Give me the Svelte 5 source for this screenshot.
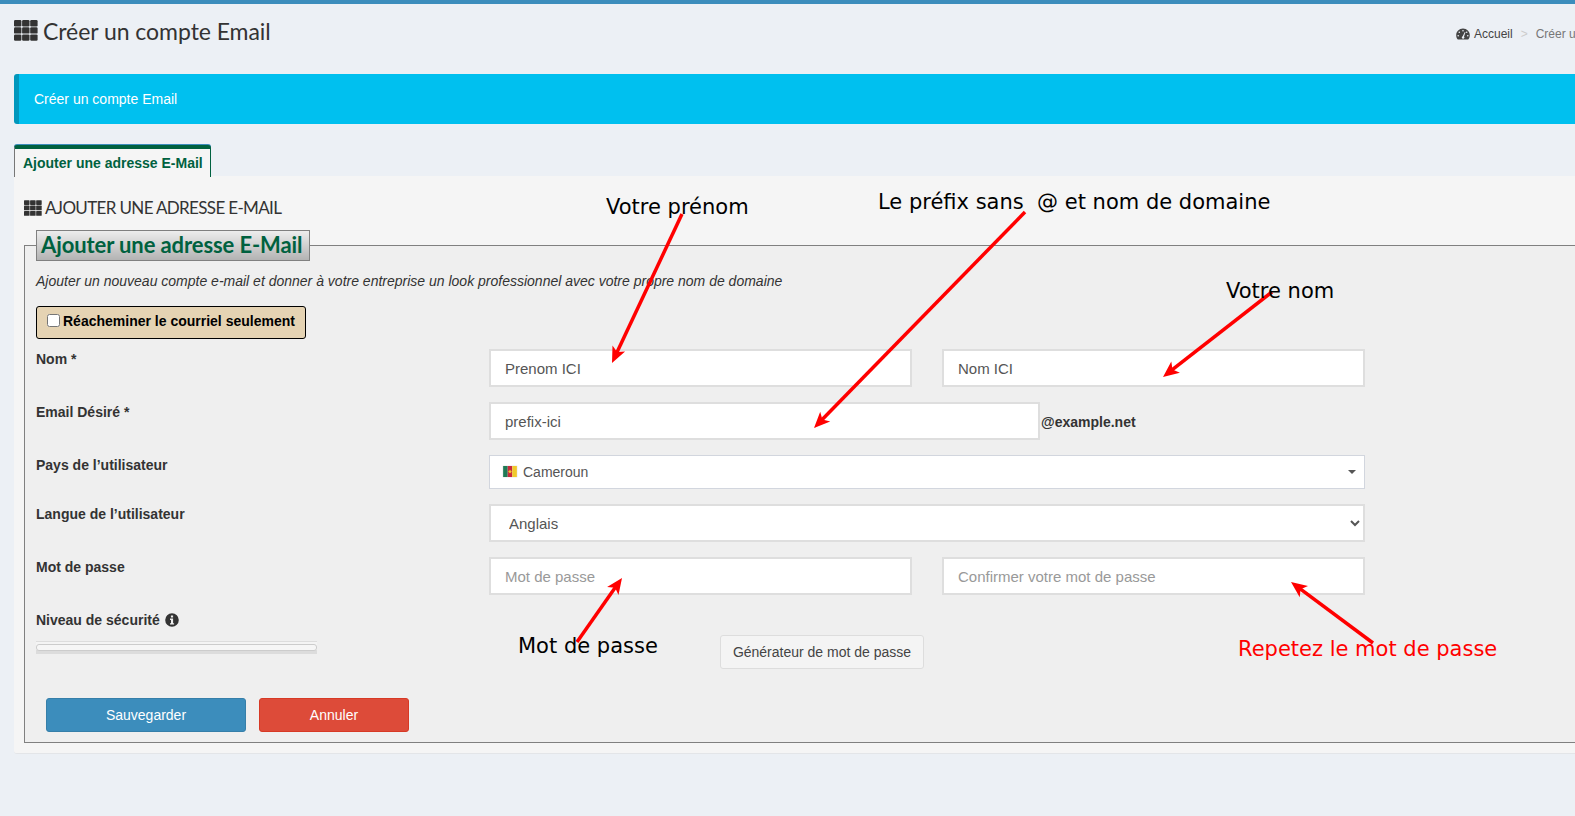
<script>
  const gridCells = [0, 1, 2];
  const arrows = [
    [682, 214, 612, 363],
    [1025, 212, 814, 428],
    [1272, 292, 1163, 377],
    [577, 642, 622, 578],
    [1373, 643, 1291, 582]
  ].map(([x1, y1, x2, y2]) => {
    const len = Math.hypot(x2 - x1, y2 - y1);
    const ux = (x2 - x1) / len;
    const uy = (y2 - y1) / len;
    const p = (back, side) => `${(x2 - ux * back - uy * side).toFixed(1)},${(y2 - uy * back + ux * side).toFixed(1)}`;
    return {
      x1, y1,
      x2: x2 - ux * 9,
      y2: y2 - uy * 9,
      head: [p(0, 0), p(16, 7), p(12, 0), p(16, -7)].join(' ')
    };
  });
</script>

<div class="page">
  <div class="topbar"></div>

  <header class="head">
    <h1 class="title">
      <svg class="th" viewBox="0 0 24 21" aria-hidden="true">
        {#each gridCells as r}
          {#each gridCells as c}
            <rect x={c * 8.1} y={r * 7.2} width="7.4" height="6.4" rx="1.2" />
          {/each}
        {/each}
      </svg>
      <span>Créer un compte Email</span>
    </h1>
    <nav class="crumbs">
      <svg class="gauge" viewBox="0 0 14 12" aria-hidden="true">
        <path fill-rule="evenodd" d="M7 .5C3.2.5.2 3.5.2 7.2c0 1.6.5 3 1.4 4.1.1.2.3.2.5.2h9.8c.2 0 .4 0 .5-.2.9-1.1 1.4-2.5 1.4-4.1C13.800 3.500 10.800.5 7 .5zM7 2a.8.8 0 1 1 0 1.600A.8.8 0 0 1 7 2zM3.300 3.500a.8.8 0 1 1 0 1.600.8.8 0 0 1 0-1.600zM10.700 3.500a.8.800 0 1 1 0 1.600.8.8 0 0 1 0-1.600zM2.200 7a.8.8 0 1 1 0 1.600.8.8 0 0 1 0-1.600zM11.800 7a.8.8 0 1 1 0 1.600.8.8 0 0 1 0-1.600zM8.800 3.900l.7.3-1.500 4.300a1.300 1.300 0 1 1-1.300-.3z" />
      </svg>
      <span class="home">Accueil</span>
      <span class="sep">&gt;</span>
      <span class="cur">Créer un compte Email</span>
    </nav>
  </header>

  <div class="callout">Créer un compte Email</div>

  <div class="tabs">
    <div class="tab">Ajouter une adresse E-Mail</div>
  </div>

  <section class="panel">
    <h2 class="panel-title">
      <svg class="th small" viewBox="0 0 24 21" aria-hidden="true">
        {#each gridCells as r}
          {#each gridCells as c}
            <rect x={c * 8.1} y={r * 7.2} width="7.4" height="6.4" rx="0.8" />
          {/each}
        {/each}
      </svg>
      <span>AJOUTER UNE ADRESSE E-MAIL</span>
    </h2>

    <fieldset class="box">
      <legend>Ajouter une adresse E-Mail</legend>
      <p class="intro">Ajouter un nouveau compte e-mail et donner à votre entreprise un look professionnel avec votre propre nom de domaine</p>

      <label class="forward"><input type="checkbox" /><span>Réacheminer le courriel seulement</span></label>

      <div class="row r-name">
        <div class="lab">Nom *</div>
        <div class="two">
          <input class="ctl" type="text" value="Prenom ICI" />
          <input class="ctl" type="text" value="Nom ICI" />
        </div>
      </div>

      <div class="row r-mail">
        <div class="lab">Email Désiré *</div>
        <div class="mail">
          <input class="ctl mailbox" type="text" value="prefix-ici" />
          <span class="domain">@example.net</span>
        </div>
      </div>

      <div class="row r-country">
        <div class="lab">Pays de l’utilisateur</div>
        <div class="select2">
          <svg class="flag" viewBox="0 0 15 12" aria-hidden="true">
            <rect width="5" height="12" fill="#1f7a56" />
            <rect x="5" width="5" height="12" fill="#c8283c" />
            <rect x="10" width="5" height="12" fill="#f0c92c" />
            <path d="M7.500 3.800l.7 1.500 1.600.1-1.200 1.100.4 1.600-1.500-.9-1.500.9.4-1.600-1.200-1.100 1.600-.1z" fill="#f0c92c" />
          </svg>
          <span>Cameroun</span>
          <i class="caret"></i>
        </div>
      </div>

      <div class="row r-lang">
        <div class="lab">Langue de l’utilisateur</div>
        <select class="ctl lang"><option>Anglais</option></select>
      </div>

      <div class="row r-pass">
        <div class="lab">Mot de passe</div>
        <div class="two">
          <input class="ctl" type="password" placeholder="Mot de passe" />
          <input class="ctl" type="password" placeholder="Confirmer votre mot de passe" />
        </div>
      </div>

      <div class="row r-strength">
        <div class="strength">
          <div class="lab">Niveau de sécurité
            <svg class="info" viewBox="0 0 14 14" aria-hidden="true">
              <path fill-rule="evenodd" d="M7 .2a6.800 6.800 0 1 0 0 13.600A6.800 6.800 0 0 0 7 .2zM5.900 2.500h2.200v1.900H5.900zM5 5.600h3.100v4.600h1v1.300H5v-1.300h1V6.900H5z" />
            </svg>
          </div>
          <div class="meter"><div class="meter-in"></div></div>
        </div>
        <button class="gen" type="button">Générateur de mot de passe</button>
      </div>

      <div class="actions">
        <button class="btn save" type="button">Sauvegarder</button>
        <button class="btn cancel" type="button">Annuler</button>
      </div>
    </fieldset>
  </section>

  <div class="notes">
    <svg class="arrows" width="1575" height="816" viewBox="0 0 1575 816" aria-hidden="true">
      {#each arrows as a}
        <line x1={a.x1} y1={a.y1} x2={a.x2} y2={a.y2} stroke="#f00" stroke-width="3.5" />
        <polygon points={a.head} fill="#f00" />
      {/each}
    </svg>
    <span class="note n1">Votre prénom</span>
    <span class="note n2">Le préfix sans&nbsp; @ et nom de domaine</span>
    <span class="note n3">Votre nom</span>
    <span class="note n4">Mot de passe</span>
    <span class="note n5">Repetez le mot de passe</span>
  </div>
</div>

<style>
  :global(html), :global(body) {
    margin: 0;
    height: 816px;
    overflow: hidden;
    background: #ecf0f5;
  }
  .page {
    position: relative;
    width: 1720px;
    height: 816px;
    overflow: hidden;
    box-sizing: border-box;
    font-family: "Liberation Sans", Arial, sans-serif;
    font-size: 14px;
    color: #333;
    background: #ecf0f5;
  }
  .topbar { height: 4px; background: #3c8dbc; }

  .head {
    display: flex;
    justify-content: space-between;
    height: 70px;
    padding-left: 14px;
  }
  .title {
    display: flex;
    align-items: flex-start;
    gap: 5px;
    margin: 0;
    padding-top: 13px;
    font: 400 23px/28px Lato, sans-serif;
    letter-spacing: -0.05px;
    color: #333;
  }
  .th { width: 24px; height: 21px; margin-top: 3px; fill: #333; }
  .th.small { width: 18px; height: 16px; margin-top: 0; }
  .crumbs {
    display: flex;
    align-items: center;
    width: 264px;
    height: 20px;
    margin-top: 20px;
    font-size: 12px;
    white-space: nowrap;
    color: #444;
  }
  .gauge { width: 14px; height: 12px; fill: #444; margin-right: 4px; }
  .sep { margin: 0 8px; color: #ccc; }
  .cur { color: #777; }

  .callout {
    margin-left: 14px;
    height: 50px;
    box-sizing: border-box;
    padding-left: 15px;
    line-height: 50px;
    color: #fff;
    background: #00c0ef;
    border-left: 5px solid #0097bc;
    border-radius: 3px 0 0 3px;
  }

  .tabs {
    display: flex;
    height: 32px;
    margin: 21px 0 0 14px;
    position: relative;
  }
  .tab {
    position: relative;
    z-index: 1;
    height: 32px;
    box-sizing: border-box;
    padding: 1px 7px 0 8px;
    line-height: 26px;
    font-weight: 700;
    color: #00613f;
    background: #f5f5f5;
    border-top: 4px solid #00613f;
    border-left: 1px solid #777;
    border-right: 1px solid #00613f;
    border-radius: 3px 3px 0 0;
    box-shadow: 0 -1px 0 #3c8dbc;
  }

  .panel {
    margin: -1px 0 0 14px;
    height: 578px;
    box-sizing: border-box;
    padding: 10px 0 0 10px;
    background: #f5f5f5;
    border-bottom: 1px solid #e3e5e8;
    border-radius: 0 0 3px 3px;
  }
  .panel-title {
    display: flex;
    align-items: center;
    gap: 3px;
    box-sizing: border-box;
    height: 44px;
    margin: 0;
    font: 400 17px/40px Lato, sans-serif;
    letter-spacing: -0.65px;
    color: #333;
  }

  .box {
    margin: 0;
    padding: 0 11px;
    height: 513px;
    box-sizing: border-box;
    background: #efefef;
    border: 1px solid #808080;
    border-right: 0;
    min-width: 0;
  }
  legend {
    box-sizing: border-box;
    height: 31px;
    padding: 0 7px 0 4px;
    font: 700 22px/28px Lato, sans-serif;
    letter-spacing: -0.1px;
    color: #00613f;
    border: 1px solid #808080;
    background: linear-gradient(#ededed, #b3b3b3);
    white-space: nowrap;
  }
  .intro {
    margin: 10px 0 0;
    line-height: 20px;
    font-style: italic;
    color: #333;
  }
  .forward {
    display: flex;
    align-items: flex-start;
    box-sizing: border-box;
    width: 270px;
    height: 33px;
    margin-top: 15px;
    padding: 6px 0 0 10px;
    font-weight: 700;
    color: #000;
    background: #e5d3b3;
    border: 1px solid #000;
    border-radius: 3px;
  }
  .forward input { width: 13px; height: 13px; margin: 1px 3px 0 0; }

  .row { display: flex; }
  .lab { width: 453px; flex: none; font-weight: 700; line-height: 20px; color: #333; }
  .r-name { margin-top: 10px; }
  .two { display: flex; gap: 30px; }
  .ctl {
    box-sizing: border-box;
    width: 423px;
    height: 38px;
    padding: 6px 14px;
    font: 15px "Liberation Sans", Arial, sans-serif;
    color: #555;
    background: #fff;
    border: 2px solid #dedede;
    border-radius: 0;
    outline: 0;
  }
  .ctl::placeholder { color: #999; opacity: 1; }
  .r-mail { margin-top: 15px; }
  .mail { display: flex; align-items: center; }
  .mailbox { width: 551px; }
  .domain { margin: 2px 0 0 1px; font-weight: 700; }
  .r-country { margin-top: 15px; }
  .select2 {
    position: relative;
    display: flex;
    align-items: center;
    gap: 6px;
    box-sizing: border-box;
    width: 876px;
    height: 34px;
    padding-left: 13px;
    color: #555;
    background: #fff;
    border: 1px solid #d2d6de;
  }
  .flag { width: 14px; height: 11px; margin-top: -1px; box-shadow: 0 0 1px #bbb; }
  .caret {
    position: absolute;
    right: 8px;
    top: 14px;
    border: 4px solid transparent;
    border-top: 4px solid #555;
    border-bottom: 0;
  }
  .r-lang { margin-top: 15px; }
  .lang { width: 876px; padding: 6px 14px; }
  .r-pass { margin-top: 15px; }
  .r-strength { margin-top: 15px; align-items: flex-start; }
  .strength { width: 684px; flex: none; }
  .info { width: 14px; height: 14px; fill: #333; vertical-align: -2px; margin-left: 1px; }
  .meter {
    box-sizing: border-box;
    width: 281px;
    height: 13px;
    margin-top: 11px;
    padding-top: 2px;
    border-top: 1px solid #ddd;
    background: linear-gradient(#f4f4f4 0, #f4f4f4 8px, #dcdcdc 8px, #dcdcdc);
  }
  .meter-in {
    background: #f6f6f6;
    border: 1px solid #ccc;
    border-radius: 3px;
    box-sizing: border-box;
    height: 7px;
  }
  .gen {
    box-sizing: border-box;
    width: 204px;
    height: 34px;
    margin-top: 25px;
    font: 14px "Liberation Sans", Arial, sans-serif;
    color: #444;
    background: #f4f4f4;
    border: 1px solid #ddd;
    border-radius: 3px;
  }
  .actions { display: flex; gap: 13px; margin: 29px 0 0 10px; }
  .btn {
    box-sizing: border-box;
    height: 34px;
    font: 14px "Liberation Sans", Arial, sans-serif;
    color: #fff;
    border-radius: 3px;
  }
  .save { width: 200px; background: #3c8dbc; border: 1px solid #367fa9; }
  .cancel { width: 150px; background: #dd4b39; border: 1px solid #d73925; }

  .notes { position: absolute; inset: 0; pointer-events: none; }
  .arrows { position: absolute; left: 0; top: 0; }
  .note {
    position: absolute;
    font: 21px/26px "DejaVu Sans", sans-serif;
    color: #000;
    white-space: nowrap;
  }
  .n1 { left: 606px; top: 194px; }
  .n2 { left: 878px; top: 189px; }
  .n3 { left: 1226px; top: 278px; }
  .n4 { left: 518px; top: 633px; }
  .n5 { left: 1238px; top: 636px; color: #f00; }
</style>
